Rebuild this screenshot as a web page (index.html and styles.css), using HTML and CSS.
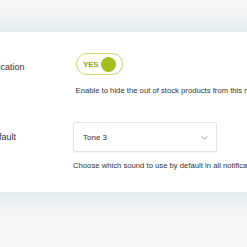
FILE: index.html
```html
<!DOCTYPE html>
<html>
<head>
<meta charset="utf-8">
<link rel="stylesheet" href="styles.css">
</head>
<body>
<div class="page">
  <div class="card">
    <div class="label label-top">Hide notification</div>
    <div class="field field-shift">
      <div class="toggle">
        <span class="toggle-text">YES</span>
        <span class="knob"></span>
      </div>
      <p class="help help-first">Enable to hide the out of stock products from this notification list</p>
    </div>
    <div class="label label-mid">Sound default</div>
    <div class="field">
      <div class="select">
        <span>Tone 3</span>
        <svg class="chev" width="7" height="4" viewBox="0 0 7 4"><path d="M0.5 0.5 L3.5 3.2 L6.5 0.5" fill="none" stroke="#9a9a9a" stroke-width="1"/></svg>
      </div>
      <p class="help help-second">Choose which sound to use by default in all notifications</p>
    </div>
  </div>
</div>
</body>
</html>
```

FILE: styles.css
```css
html, body {
  margin: 0;
  padding: 0;
}
body {
  background: #f8f8f8;
  overflow: hidden;
  width: 247px;
  height: 247px;
  font-family: "Liberation Sans", Arial, sans-serif;
  color: #333;
}
.page {
  padding-top: 32px;
}
.card {
  background: #fff;
  margin-left: -60px;
  width: 420px;
  box-sizing: border-box;
  padding: 21px 0 21px 20.5px;
  display: grid;
  grid-template-columns: 112.5px 1fr;
  row-gap: 26px;
  box-shadow: 0 0 30px 4px rgba(180, 205, 215, 0.5);
}
.label {
  font-size: 9px;
  white-space: nowrap;
}
.label-top {
  line-height: 11px;
  margin-top: 8.5px;
}
.label-mid {
  line-height: 30px;
}
.field {
  display: flex;
  flex-direction: column;
  align-items: flex-start;
}
.field-shift {
  padding-left: 2.5px;
}
.toggle {
  box-sizing: border-box;
  width: 47px;
  height: 22px;
  border: 1.5px solid #c9d56e;
  border-radius: 11px;
  display: flex;
  align-items: center;
  padding-left: 6.5px;
  gap: 3px;
}
.toggle-text {
  font-size: 8px;
  font-weight: bold;
  color: #8fa51f;
  letter-spacing: -0.2px;
}
.knob {
  width: 15px;
  height: 15px;
  border-radius: 50%;
  background: #a5bd1d;
}
.help {
  margin: 0;
  font-size: 7.7px;
  line-height: 10px;
  white-space: nowrap;
  color: #333;
}
.help-first {
  margin-top: 11px;
}
.help-second {
  margin-top: 9px;
}
.select {
  box-sizing: border-box;
  width: 144px;
  height: 30px;
  border: 1px solid #e4e4e4;
  border-radius: 2px;
  box-shadow: 0 1px 2px rgba(0, 0, 0, 0.05);
  display: flex;
  align-items: center;
  justify-content: space-between;
  padding: 0 8px 0 9px;
  font-size: 8px;
  color: #333;
}
.chev {
  margin-top: 2px;
}
```
